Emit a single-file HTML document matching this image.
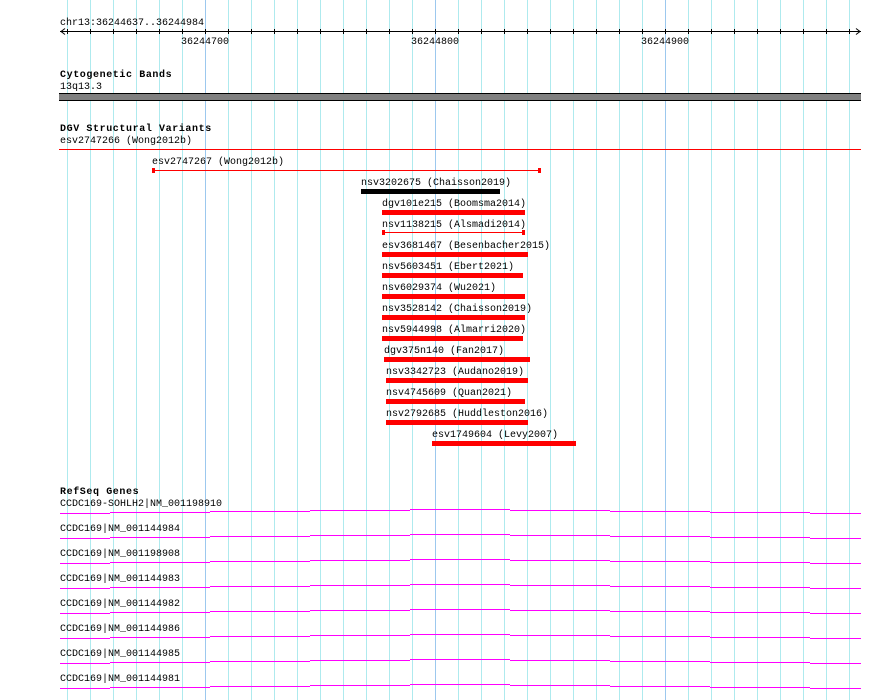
<!DOCTYPE html>
<html><head><meta charset="utf-8"><style>
html,body{margin:0;padding:0;background:#fff;width:890px;height:700px;overflow:hidden}
svg{display:block}
text{font-family:"Liberation Mono",monospace;font-size:10px;fill:#000}
.b{font-weight:bold;letter-spacing:0.6px}
</style></head><body>
<svg width="890" height="700" viewBox="0 0 890 700" xmlns="http://www.w3.org/2000/svg">
<g id="grid" stroke-width="1" shape-rendering="crispEdges"></g>
<g id="ticks" shape-rendering="crispEdges"></g>
<text x="60" y="25">chr13:36244637..36244984</text>
<line x1="60" y1="31.5" x2="861" y2="31.5" stroke="#000" shape-rendering="crispEdges"/>
<polyline points="65,28.5 61,31.5 65,34.5" fill="none" stroke="#000"/>
<polyline points="856,28.5 860,31.5 856,34.5" fill="none" stroke="#000"/>
<text x="181" y="44">36244700</text>
<text x="411" y="44">36244800</text>
<text x="641" y="44">36244900</text>

<text class="b" x="60" y="77">Cytogenetic Bands</text>
<text x="60" y="89">13q13.3</text>
<rect x="59" y="93" width="802" height="7" fill="#808080"/>
<rect x="59" y="93" width="802" height="1" fill="#000"/>
<rect x="59" y="100" width="802" height="1" fill="#000"/>

<text class="b" x="60" y="131">DGV Structural Variants</text>
<text x="60" y="143">esv2747266 (Wong2012b)</text>
<rect x="59" y="149" width="802" height="1" fill="#f00"/>

<text x="152" y="164">esv2747267 (Wong2012b)</text>
<rect x="153" y="170" width="387" height="1" fill="#f00"/>
<rect x="152" y="168" width="3" height="5" fill="#f00"/>
<rect x="538" y="168" width="3" height="5" fill="#f00"/>

<text x="361" y="185">nsv3202675 (Chaisson2019)</text>
<rect x="361" y="189" width="139" height="5" fill="#000"/>

<g fill="#f00">
<text x="382" y="206">dgv101e215 (Boomsma2014)</text>
<rect x="382" y="210" width="143" height="5"/>
<text x="382" y="227">nsv1138215 (Alsmadi2014)</text>
<rect x="382" y="232" width="142" height="1"/>
<rect x="382" y="230" width="3" height="5"/><rect x="522" y="230" width="3" height="5"/>
<text x="382" y="248">esv3681467 (Besenbacher2015)</text>
<rect x="382" y="252" width="146" height="5"/>
<text x="382" y="269">nsv5603451 (Ebert2021)</text>
<rect x="382" y="273" width="141" height="5"/>
<text x="382" y="290">nsv6029374 (Wu2021)</text>
<rect x="382" y="294" width="143" height="5"/>
<text x="382" y="311">nsv3528142 (Chaisson2019)</text>
<rect x="382" y="315" width="143" height="5"/>
<text x="382" y="332">nsv5944998 (Almarri2020)</text>
<rect x="382" y="336" width="141" height="5"/>
<text x="384" y="353">dgv375n140 (Fan2017)</text>
<rect x="384" y="357" width="146" height="5"/>
<text x="386" y="374">nsv3342723 (Audano2019)</text>
<rect x="386" y="378" width="142" height="5"/>
<text x="386" y="395">nsv4745609 (Quan2021)</text>
<rect x="386" y="399" width="139" height="5"/>
<text x="386" y="416">nsv2792685 (Huddleston2016)</text>
<rect x="386" y="420" width="142" height="5"/>
<text x="432" y="437">esv1749604 (Levy2007)</text>
<rect x="432" y="441" width="144" height="5"/>
</g>

<text class="b" x="60" y="494">RefSeq Genes</text>
<text x="60" y="506">CCDC169-SOHLH2|NM_001198910</text>
<text x="60" y="531">CCDC169|NM_001144984</text>
<text x="60" y="556">CCDC169|NM_001198908</text>
<text x="60" y="581">CCDC169|NM_001144983</text>
<text x="60" y="606">CCDC169|NM_001144982</text>
<text x="60" y="631">CCDC169|NM_001144986</text>
<text x="60" y="656">CCDC169|NM_001144985</text>
<text x="60" y="681">CCDC169|NM_001144981</text>
<g id="genes" fill="#f0f"></g>
</svg>
<script>
var NS='http://www.w3.org/2000/svg';
var g=document.getElementById('grid'), tk=document.getElementById('ticks');
for(var k=0;k<35;k++){var x=Math.round(66.9+23*k)+0.5;if(x>862)break;
var l=document.createElementNS(NS,'line');
l.setAttribute('x1',x);l.setAttribute('x2',x);l.setAttribute('y1',0);l.setAttribute('y2',700);
l.setAttribute('stroke',(k==6||k==16||k==26)?'#9cc8ee':'#aeeaee');g.appendChild(l);
var t=document.createElementNS(NS,'line');
t.setAttribute('x1',x);t.setAttribute('x2',x);t.setAttribute('y1',29);t.setAttribute('y2',34);t.setAttribute('stroke','#000');
tk.appendChild(t);}
var gg=document.getElementById('genes');
var segs=[[60,110,4],[110,210,3],[210,310,2],[310,410,1],[410,510,0],[510,610,1],[610,710,2],[710,810,3],[810,861,4]];
for(var r=0;r<8;r++){var base=509+25*r;
for(var i=0;i<segs.length;i++){var s=segs[i];var e=document.createElementNS(NS,'rect');
e.setAttribute('x',s[0]);e.setAttribute('y',base+s[2]);e.setAttribute('width',s[1]-s[0]);e.setAttribute('height',1);gg.appendChild(e);}}
</script>
</body></html>
